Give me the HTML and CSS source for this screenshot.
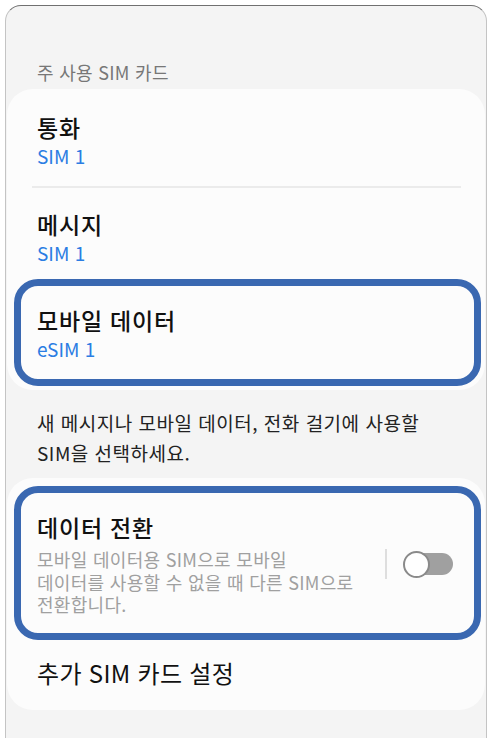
FILE: index.html
```html
<!DOCTYPE html>
<html lang="ko">
<head>
    <meta charset="UTF-8">
    <meta name="viewport" content="width=device-width, initial-scale=1.0">
    <title>주 사용 SIM 카드</title>
    <link rel="stylesheet" href="styles.css">
</head>
<body>

<div class="phone">
    <div class="section-title">주 사용 SIM 카드</div>

    <!-- SIM choices -->
    <div class="card">
        <div class="item first">
            <div class="item-title">통화</div>
            <div class="item-value">SIM 1</div>
        </div>
        <div class="divider"></div>
        <div class="item">
            <div class="item-title">메시지</div>
            <div class="item-value">SIM 1</div>
        </div>
        <div class="highlight">
            <div class="item-title">모바일 데이터</div>
            <div class="item-value">eSIM 1</div>
        </div>
    </div>

    <p class="help">새 메시지나 모바일 데이터, 전화 걸기에 사용할<br>SIM을 선택하세요.</p>

    <!-- Switching -->
    <div class="card card-bottom">
        <div class="highlight switch-row">
            <div class="switch-text">
                <div class="item-title">데이터 전환</div>
                <div class="item-desc">모바일 데이터용 SIM으로 모바일<br>데이터를 사용할 수 없을 때 다른 SIM으로<br>전환합니다.</div>
            </div>
            <span class="v-line"></span>
            <span class="switch">
                <span class="track"></span>
                <span class="thumb"></span>
            </span>
        </div>
        <div class="item-title more">추가 SIM 카드 설정</div>
    </div>
</div>

</body>
</html>
```

FILE: styles.css
```css
/* General Reset */
* {
    margin: 0;
    padding: 0;
    box-sizing: border-box;
    font-family: 'Noto Sans CJK KR', 'Noto Sans', sans-serif;
}

body {
    background: #ffffff;
    width: 490px;
    height: 738px;
    overflow: hidden;
}

.phone {
    margin: 5px 0 0 5px;
    width: 482px;
    height: 740px;
    background: #f4f4f4;
    border: 1px solid #c4c4c4;
    border-top-color: #707070;
    border-radius: 16px 16px 0 0;
}

.section-title {
    padding: 55px 0 0 31px;
    font-size: 18px;
    line-height: 22px;
    letter-spacing: 0.3px;
    color: #777;
}

.card {
    margin: 6px 1px 0;
    padding-bottom: 4px;
    background: #fcfcfc;
    border-radius: 26px;
}

.item {
    padding: 22px 0 14px 30px;
}

.item.first {
    padding-top: 24px;
}

.item-title {
    font-size: 23px;
    line-height: 28px;
    letter-spacing: 0.8px;
    font-weight: 500;
    color: #111;
}

.item-value {
    margin-top: 3px;
    font-size: 19px;
    line-height: 24px;
    color: #2b7de3;
}

.divider {
    margin: 4px 24px 0 25px;
    height: 2px;
    background: #ebebeb;
}

/* Blue outline around the items being pointed at */
.highlight {
    margin: 0 4px 0 7px;
    padding: 20px 21px 18px 16px;
    border: 7px solid #3a68b1;
    border-radius: 24px;
}

.help {
    padding: 18px 0 0 31px;
    font-size: 19px;
    line-height: 30px;
    letter-spacing: 0.5px;
    color: #222;
}

.card-bottom {
    margin-top: 10px;
    padding-top: 8px;
    padding-bottom: 22px;
}

.switch-row {
    display: flex;
    align-items: center;
    padding-bottom: 17px;
}

.switch-text {
    flex: 1;
}

.item-desc {
    margin-top: 7px;
    font-size: 18px;
    line-height: 22.5px;
    letter-spacing: 0.3px;
    color: #a0a0a0;
}

.v-line {
    width: 2px;
    height: 30px;
    margin: 0 16px 0 0;
    background: #dedede;
}

.switch {
    position: relative;
    width: 50px;
    height: 28px;
}

.track {
    position: absolute;
    left: 2px;
    top: 3px;
    width: 48px;
    height: 22px;
    border-radius: 11px;
    background: #a0a0a0;
}

.thumb {
    position: absolute;
    left: 0;
    top: 1px;
    width: 27px;
    height: 27px;
    border-radius: 50%;
    background: #fff;
    border: 2px solid #8a8a8a;
}

.item-title.more {
    margin-top: 18px;
    padding-left: 30px;
    font-size: 24px;
    line-height: 30px;
    letter-spacing: 0.3px;
    font-weight: 400;
}
```
